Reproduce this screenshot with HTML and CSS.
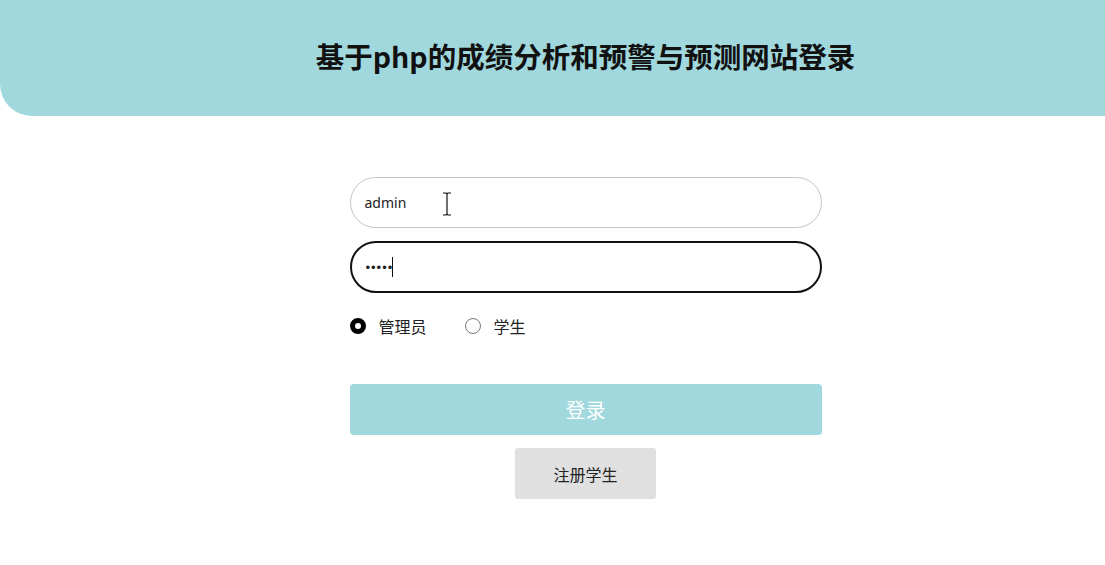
FILE: index.html
```html
<!DOCTYPE html>
<html lang="zh">
<head>
<meta charset="utf-8">
<title>登录</title>
<link rel="stylesheet" href="styles.css">
</head>
<body>
<header class="header">
  <h1 class="title">基于php的成绩分析和预警与预测网站登录</h1>
</header>
<main class="main">
  <form class="form">
    <div class="field-wrap">
      <input class="field" type="text" value="admin">
      <svg class="ibeam" width="10" height="24" viewBox="0 0 10 24"><path d="M1 1h3l1 1 1-1h3M5 2v20M1 23h3l1-1 1 1h3" fill="none" stroke="#111" stroke-width="1.2"/></svg>
    </div>
    <div class="field-wrap pw-wrap">
      <input class="field field-focus" type="password" value="12345">
      <span class="caret"></span>
    </div>
    <div class="roles">
      <label class="role"><span class="radio radio-on"></span>管理员</label>
      <label class="role"><span class="radio"></span>学生</label>
    </div>
    <button class="btn-login" type="button">登录</button>
    <button class="btn-reg" type="button">注册学生</button>
  </form>
</main>
</body>
</html>
```

FILE: styles.css
```css
* { box-sizing: border-box; }
html, body { margin: 0; padding: 0; background: #fff; }
body {
  font-family: "Noto Sans CJK SC", "Noto Sans", sans-serif;
  color: #222;
}
.header {
  height: 116px;
  background: #a0d8dd;
  border-bottom-left-radius: 32px;
  display: flex;
  align-items: center;
  justify-content: center;
  padding-left: 66px;
}
.title {
  margin: 0;
  font-size: 28.5px;
  font-weight: 700;
  color: #111;
  padding-bottom: 5px;
}
.main {
  display: flex;
  justify-content: center;
  padding-left: 66px;
  padding-top: 61px;
}
.form {
  width: 472px;
  display: flex;
  flex-direction: column;
}
.field-wrap { position: relative; }
.ibeam { position: absolute; left: 92px; top: 15px; }
.field {
  display: block;
  width: 472px;
  height: 51px;
  border: 1px solid #c4c4c4;
  border-radius: 26px;
  padding: 0 14px;
  font-family: "Noto Sans", sans-serif;
  font-size: 14px;
  color: #222;
  outline: none;
  background: #fff;
}
.pw-wrap { margin-top: 13px; }
.field-focus {
  border: 2px solid #111;
  height: 52px;
  font-family: "Liberation Sans", sans-serif;
  font-size: 13px;
  letter-spacing: 1px;
}
.caret {
  position: absolute;
  left: 42px;
  top: 16px;
  width: 1.5px;
  height: 20px;
  background: #111;
}
.roles {
  display: flex;
  align-items: center;
  gap: 38px;
  margin-top: 23px;
  height: 20px;
}
.role {
  display: flex;
  align-items: center;
  gap: 13px;
  font-size: 16px;
  color: #222;
}
.radio {
  width: 16px;
  height: 16px;
  border-radius: 50%;
  border: 1px solid #777;
  background: #fff;
}
.radio-on {
  border: 5px solid #000;
}
.btn-login {
  margin-top: 48px;
  height: 51px;
  width: 472px;
  border: none;
  border-radius: 4px;
  background: #a0d8dd;
  color: #fff;
  font-family: "Noto Sans CJK SC", sans-serif;
  font-size: 20px;
}
.btn-reg {
  margin-top: 13px;
  align-self: center;
  width: 141px;
  height: 51px;
  border: none;
  border-radius: 3px;
  background: #e0e0e0;
  color: #222;
  font-family: "Noto Sans CJK SC", sans-serif;
  font-size: 16px;
}
```
